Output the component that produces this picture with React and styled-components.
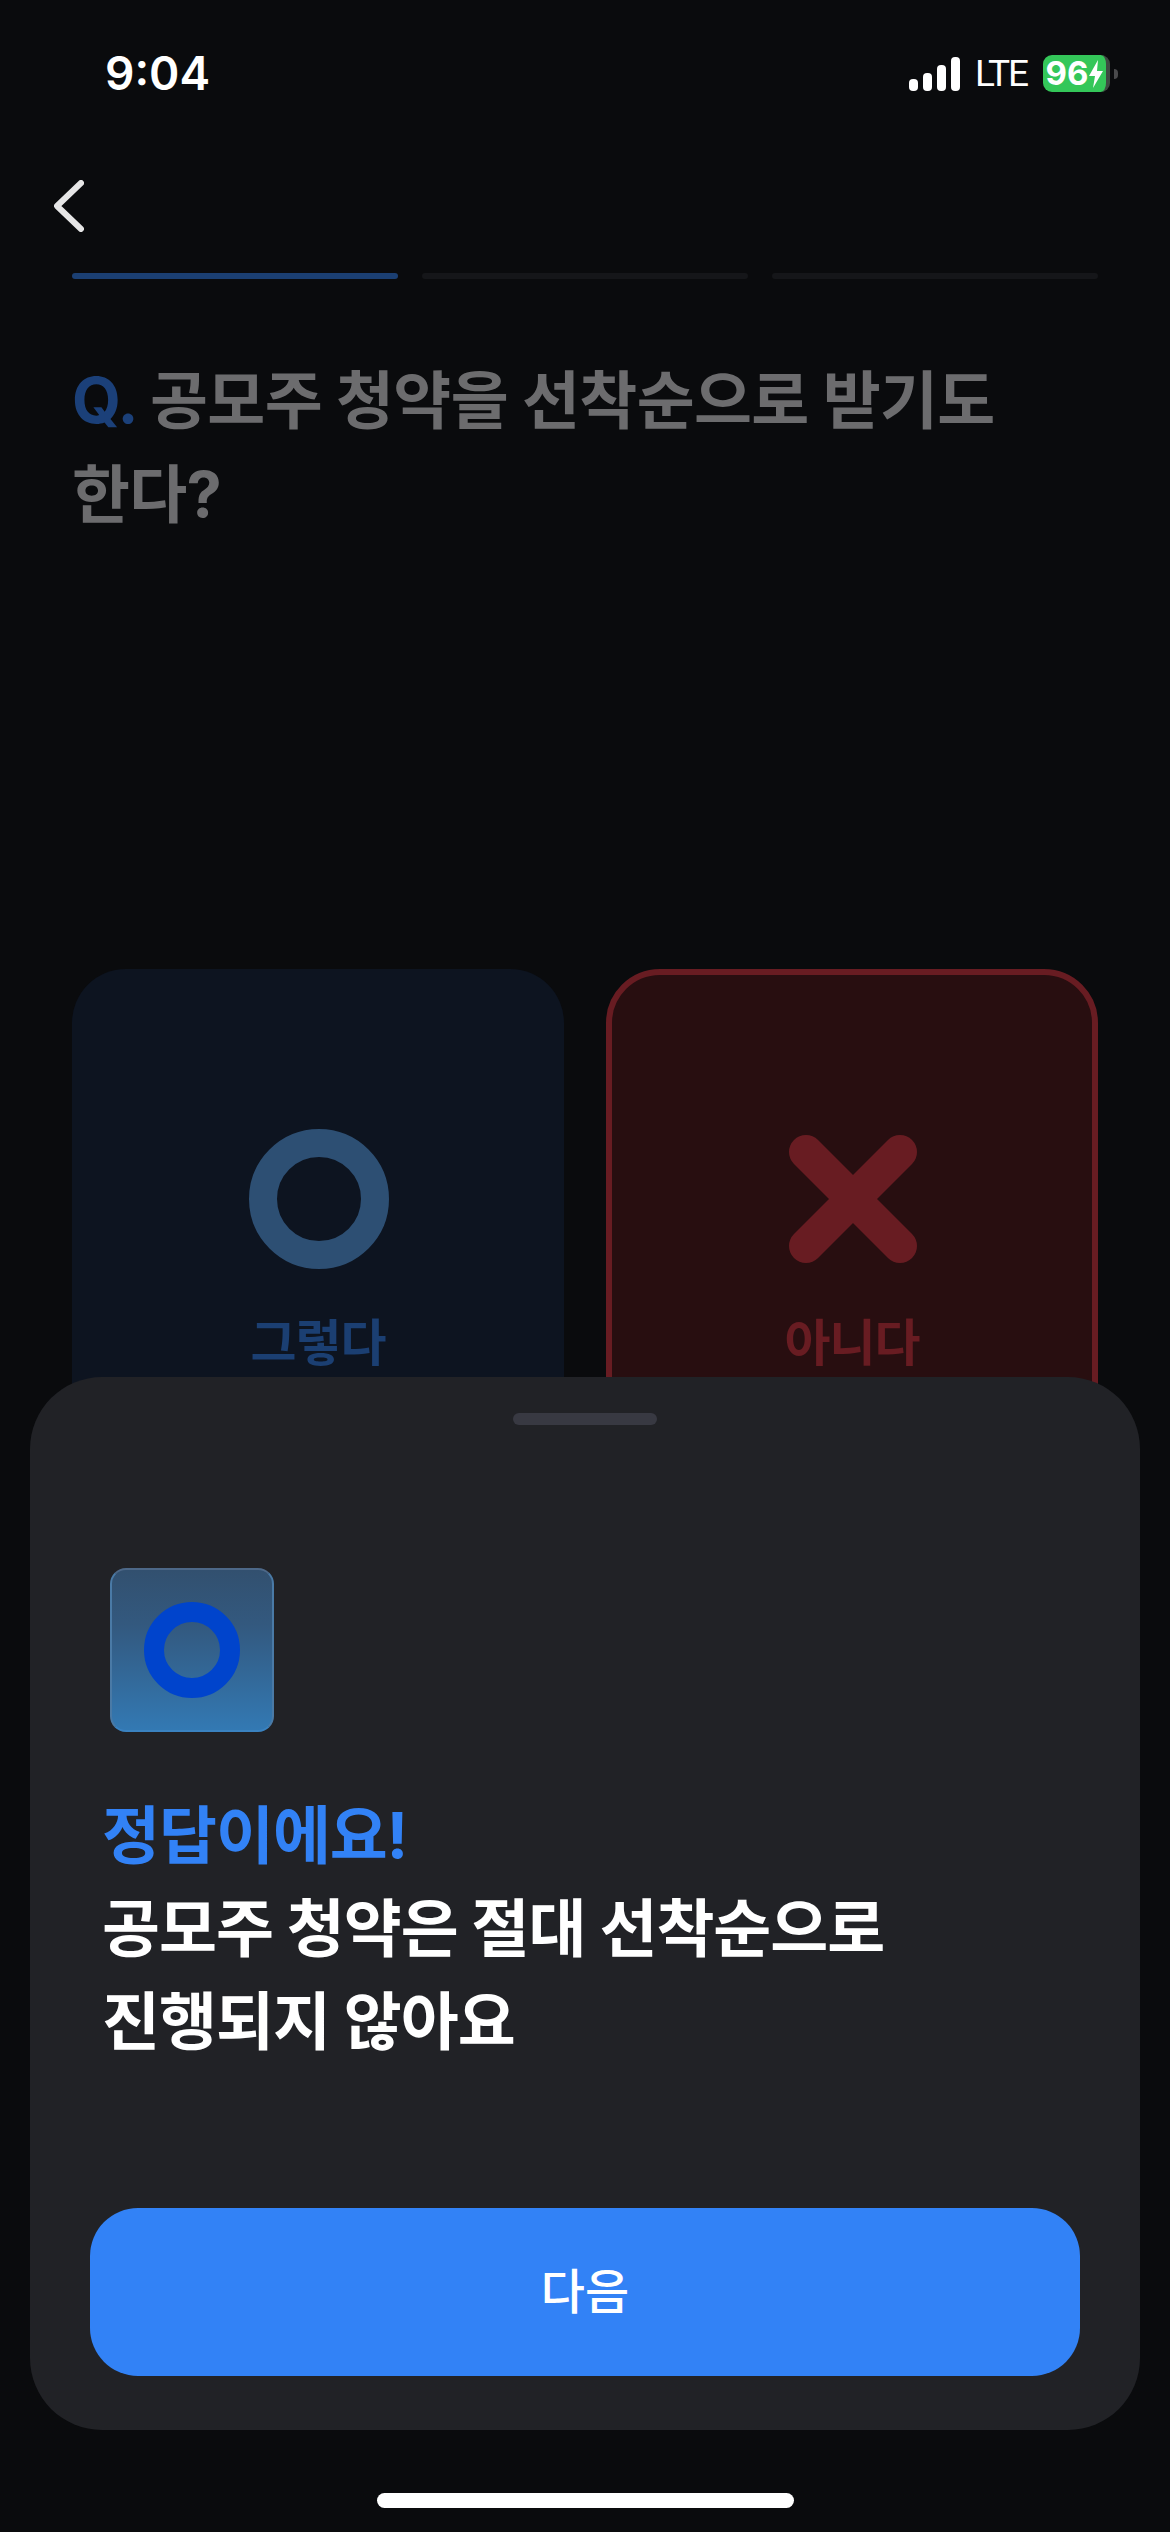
import styled, { createGlobalStyle } from "styled-components";

const GlobalStyle = createGlobalStyle`
  html, body {
    margin: 0;
    padding: 0;
    background: #0a0b0d;
  }
`;

const Screen = styled.div`
  position: relative;
  width: 1170px;
  height: 2532px;
  overflow: hidden;
  background: #0a0b0d;
  font-family: Inter, "Noto Sans CJK KR", sans-serif;
`;

const StatusBar = styled.div`
  display: flex;
  align-items: center;
  justify-content: space-between;
  height: 37px;
  padding: 55px 52px 0 105px;
`;

const Time = styled.span`
  color: #fff;
  font-size: 46px;
  font-weight: 600;
  line-height: 37px;
`;

const StatusRight = styled.div`
  display: flex;
  align-items: center;
  color: #fff;
`;

const SignalBars = styled.div`
  display: flex;
  align-items: flex-end;
  gap: 5px;
  height: 34px;
  margin-right: 15px;
`;

const Bar = styled.i`
  display: block;
  width: 9px;
  height: ${(p) => p.$h}px;
  border-radius: 4px;
  background: #fff;
`;

const Lte = styled.span`
  font-family: Roboto, sans-serif;
  font-size: 37px;
  font-weight: 400;
  line-height: 37px;
  letter-spacing: -2px;
  margin-right: 16px;
`;

const Battery = styled.div`
  display: flex;
  align-items: center;
  justify-content: center;
  gap: 1px;
  box-sizing: border-box;
  width: 67px;
  height: 37px;
  border-radius: 9px;
  border-right: 4px solid #3f4a42;
  background: #34c759;
  font-size: 33px;
  font-weight: 700;
  line-height: 37px;
  color: #fff;
`;

const BatteryTip = styled.i`
  display: block;
  width: 4px;
  height: 10px;
  margin-left: 4px;
  border-radius: 0 4px 4px 0;
  background: #4a4a4c;
`;

const BackRow = styled.div`
  height: 52px;
  padding: 88px 0 0 54px;
`;

const Progress = styled.div`
  display: flex;
  gap: 24px;
  padding: 41px 72px 0;
`;

const Step = styled.div`
  flex: 1;
  height: 6px;
  border-radius: 3px;
  background: ${(p) => (p.$active ? "#1b3f72" : "#151619")};
`;

const Question = styled.h1`
  margin: 0;
  padding: 74px 72px 0;
  color: #6c6c6e;
  font-size: 63px;
  font-weight: 700;
  line-height: 94px;
  letter-spacing: -0.7px;
`;

const QMark = styled.span`
  color: #1b4079;
`;

const Choices = styled.div`
  display: flex;
  gap: 42px;
  padding: 428px 72px 0;
`;

const Choice = styled.div`
  width: 492px;
  box-sizing: border-box;
  height: 560px;
  display: flex;
  flex-direction: column;
  align-items: center;
  padding-top: ${(p) => (p.$selected ? 154 : 160)}px;
  border-radius: 54px;
  background: ${(p) => (p.$selected ? "#280e10" : "#0d1420")};
  border: ${(p) => (p.$selected ? "6px solid #681c22" : "none")};
`;

const ChoiceIcon = styled.svg`
  display: block;
  width: 140px;
  height: 140px;
  margin-left: 2px;
`;

const ChoiceLabel = styled.span`
  margin-top: 38px;
  color: ${(p) => p.$color};
  font-size: 50px;
  font-weight: 700;
  line-height: 72px;
  letter-spacing: -1px;
`;

const Sheet = styled.div`
  position: absolute;
  left: 30px;
  top: 1377px;
  box-sizing: border-box;
  width: 1110px;
  height: 1053px;
  display: flex;
  flex-direction: column;
  padding: 36px 60px 54px;
  border-radius: 72px;
  background: #212226;
`;

const Handle = styled.div`
  align-self: center;
  width: 144px;
  height: 12px;
  border-radius: 6px;
  background: #383942;
`;

const Thumb = styled.div`
  display: flex;
  align-items: center;
  justify-content: center;
  box-sizing: border-box;
  width: 164px;
  height: 164px;
  margin: 143px 0 0 20px;
  border-radius: 16px;
  border: 2px solid;
  border-color: #4d6888 #4a7aa6 #3a82c0;
  background: linear-gradient(180deg, #32506f 0%, #33597f 35%, #3379b3 100%);
`;

const ThumbRing = styled.svg`
  display: block;
  width: 96px;
  height: 96px;
`;

const Answer = styled.div`
  margin: 57px 0 0 12px;
  font-size: 63px;
  font-weight: 700;
  line-height: 93px;
  letter-spacing: -1px;
  color: #fff;
`;

const Correct = styled.div`
  color: #3282f6;
`;

const NextButton = styled.button`
  margin-top: auto;
  height: 168px;
  padding: 0 0 8px;
  border: none;
  border-radius: 48px;
  background: #3282f6;
  color: #fff;
  font-family: inherit;
  font-size: 48px;
  font-weight: 500;
`;

const HomeBar = styled.div`
  position: absolute;
  left: 377px;
  top: 2493px;
  width: 417px;
  height: 15px;
  border-radius: 8px;
  background: #fff;
`;

export default function App() {
  return (
    <Screen>
      <GlobalStyle />
      <StatusBar>
        <Time>9:04</Time>
        <StatusRight>
          <SignalBars>
            <Bar $h={12} />
            <Bar $h={18} />
            <Bar $h={26} />
            <Bar $h={34} />
          </SignalBars>
          <Lte>LTE</Lte>
          <Battery>
            96
            <svg width="14" height="28" viewBox="0 0 14 28">
              <path d="M9 0 L0 16 H6 L4 28 L14 11 H8 Z" fill="#fff" />
            </svg>
          </Battery>
          <BatteryTip />
        </StatusRight>
      </StatusBar>

      <BackRow>
        <svg width="30" height="52" viewBox="0 0 30 52" style={{ display: "block" }}>
          <path
            d="M27 3 L3 26 L27 49"
            fill="none"
            stroke="#e6e6e6"
            strokeWidth="6"
            strokeLinecap="round"
            strokeLinejoin="round"
          />
        </svg>
      </BackRow>

      <Progress>
        <Step $active />
        <Step />
        <Step />
      </Progress>

      <Question>
        <QMark>Q.</QMark> 공모주 청약을 선착순으로 받기도
        <br />
        한다?
      </Question>

      <Choices>
        <Choice>
          <ChoiceIcon viewBox="0 0 140 140">
            <circle cx="70" cy="70" r="56" fill="none" stroke="#2d4f73" strokeWidth="28" />
          </ChoiceIcon>
          <ChoiceLabel $color="#1b3f72">그렇다</ChoiceLabel>
        </Choice>
        <Choice $selected>
          <ChoiceIcon viewBox="0 0 140 140">
            <path
              d="M23 23 L117 117 M117 23 L23 117"
              fill="none"
              stroke="#681c22"
              strokeWidth="34"
              strokeLinecap="round"
            />
          </ChoiceIcon>
          <ChoiceLabel $color="#681c22">아니다</ChoiceLabel>
        </Choice>
      </Choices>

      <Sheet>
        <Handle />
        <Thumb>
          <ThumbRing viewBox="0 0 96 96">
            <circle cx="48" cy="48" r="38" fill="none" stroke="#0044cc" strokeWidth="20" />
          </ThumbRing>
        </Thumb>
        <Answer>
          <Correct>정답이에요!</Correct>
          공모주 청약은 절대 선착순으로
          <br />
          진행되지 않아요
        </Answer>
        <NextButton>다음</NextButton>
      </Sheet>

      <HomeBar />
    </Screen>
  );
}
